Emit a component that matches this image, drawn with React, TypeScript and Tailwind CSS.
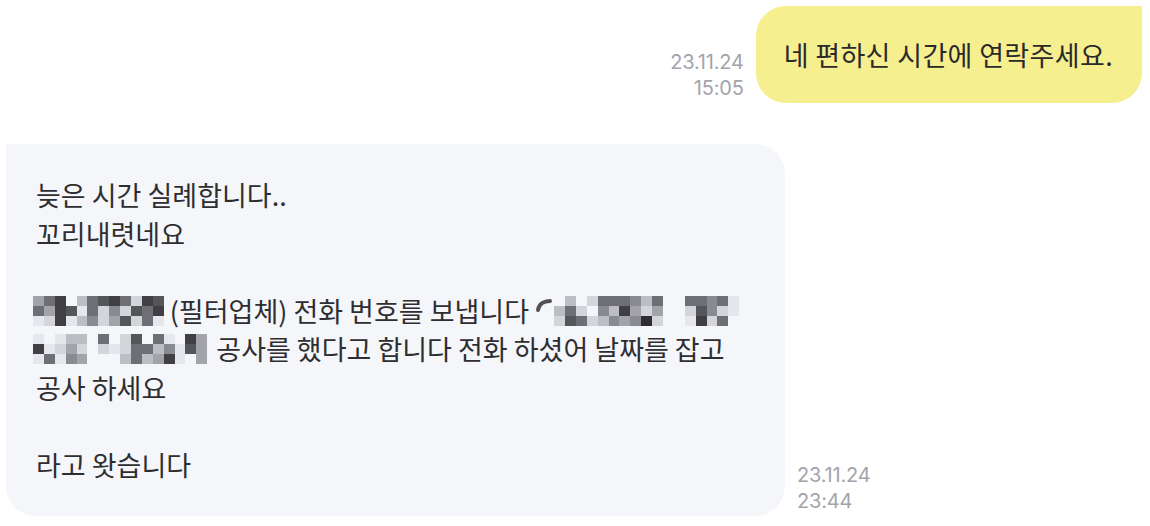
import React from 'react';

const shades = [
  'bg-transparent',
  'bg-[#e6e7ec]',
  'bg-[#d4d5da]',
  'bg-[#bdbec3]',
  'bg-[#a3a4a9]',
  'bg-[#8a8b90]',
  'bg-[#6e6f74]',
  'bg-[#55565a]',
  'bg-[#404044]',
  'bg-[#2e2e32]',
];

const mosaicA = [
  [4, 6, 8, 0, 3, 6, 7, 8, 6, 2, 8, 7],
  [6, 4, 8, 7, 1, 6, 2, 5, 2, 7, 6, 8],
  [1, 2, 8, 1, 3, 5, 2, 4, 7, 2, 6, 1],
];

const mosaicB = [
  [0, 3, 0, 2, 6, 6, 6, 5, 3, 6, 0, 0, 6, 6, 5, 6, 1],
  [3, 6, 2, 0, 5, 3, 8, 4, 2, 4, 0, 0, 2, 7, 5, 2, 1],
  [2, 7, 6, 2, 3, 5, 4, 5, 9, 2, 0, 0, 1, 8, 2, 6, 0],
];

const mosaicC = [
  [1, 0, 1, 3, 3, 0, 6, 0, 2, 7, 0, 6, 1, 0, 8, 4],
  [8, 1, 2, 4, 2, 0, 2, 1, 2, 6, 6, 3, 5, 1, 7, 4],
  [1, 6, 1, 5, 4, 0, 0, 0, 3, 6, 3, 4, 8, 1, 0, 4],
];

function Mosaic({ grid, curl = false }: { grid: number[][]; curl?: boolean }) {
  return (
    <span className="flex items-center shrink-0">
      {curl && (
        <svg width="18" height="30" viewBox="0 0 18 30" className="mr-[1px]">
          <path d="M3 14 C4 8 9 5 15 5" stroke="#505055" strokeWidth="4" fill="none" strokeLinecap="round" />
        </svg>
      )}
      <span className="flex flex-col">
        {grid.map((row, i) => (
          <span key={i} className="flex">
            {row.map((v, j) => (
              <span key={j} className={`block w-[10.9px] h-[10px] ${shades[v]}`} />
            ))}
          </span>
        ))}
      </span>
    </span>
  );
}

function Stamp({ date, time, align }: { date: string; time: string; align: 'left' | 'right' }) {
  return (
    <div
      className={`shrink-0 mb-[2px] text-[20px] leading-[26px] text-[#a3a3ab] tracking-[-0.2px] ${
        align === 'right' ? 'text-right' : 'text-left'
      }`}
      style={{ fontFamily: 'Inter, "Noto Sans", sans-serif' }}
    >
      <div>{date}</div>
      <div>{time}</div>
    </div>
  );
}

export default function App() {
  const kr = { fontFamily: '"Noto Sans CJK KR", "Noto Sans", sans-serif' };
  return (
    <div className="w-[1150px] h-[526px] bg-white overflow-hidden pt-[6px] px-[6px]" style={kr}>
      <div className="flex justify-end items-end gap-[12px] pr-[2px]">
        <Stamp date="23.11.24" time="15:05" align="right" />
        <div className="shrink-0 bg-[#f6ef8f] rounded-[30px] rounded-tr-none pl-[28px] pr-[29px] py-[30px] text-[27px] leading-[37px] text-[#2a2a2a] tracking-[0.35px] whitespace-nowrap">
          네 편하신 시간에 연락주세요.
        </div>
      </div>

      <div className="flex items-end gap-[12px] mt-[41px]">
        <div className="shrink-0 w-[779px] bg-[#f5f6fa] rounded-[30px] rounded-tl-none pl-[30px] pr-[20px] py-[32px] text-[27px] leading-[38.5px] text-[#2e2e31]">
          <div className="h-[38.5px]">늦은 시간 실례합니다..</div>
          <div className="h-[38.5px]">꼬리내렷네요</div>
          <div className="h-[38.5px]" />
          <div className="h-[38.5px] flex items-center whitespace-pre -ml-[3px]">
            <Mosaic grid={mosaicA} />
            <span> (필터업체) 전화 번호를 보냅니다 </span>
            <Mosaic grid={mosaicB} curl />
          </div>
          <div className="h-[38.5px] flex items-center whitespace-pre -ml-[3px]">
            <Mosaic grid={mosaicC} />
            <span className="ml-[3px]"> 공사를 했다고 합니다 전화 하셨어 날짜를 잡고</span>
          </div>
          <div className="h-[38.5px]">공사 하세요</div>
          <div className="h-[38.5px]" />
          <div className="h-[38.5px]">라고 왓습니다</div>
        </div>
        <Stamp date="23.11.24" time="23:44" align="left" />
      </div>
    </div>
  );
}
